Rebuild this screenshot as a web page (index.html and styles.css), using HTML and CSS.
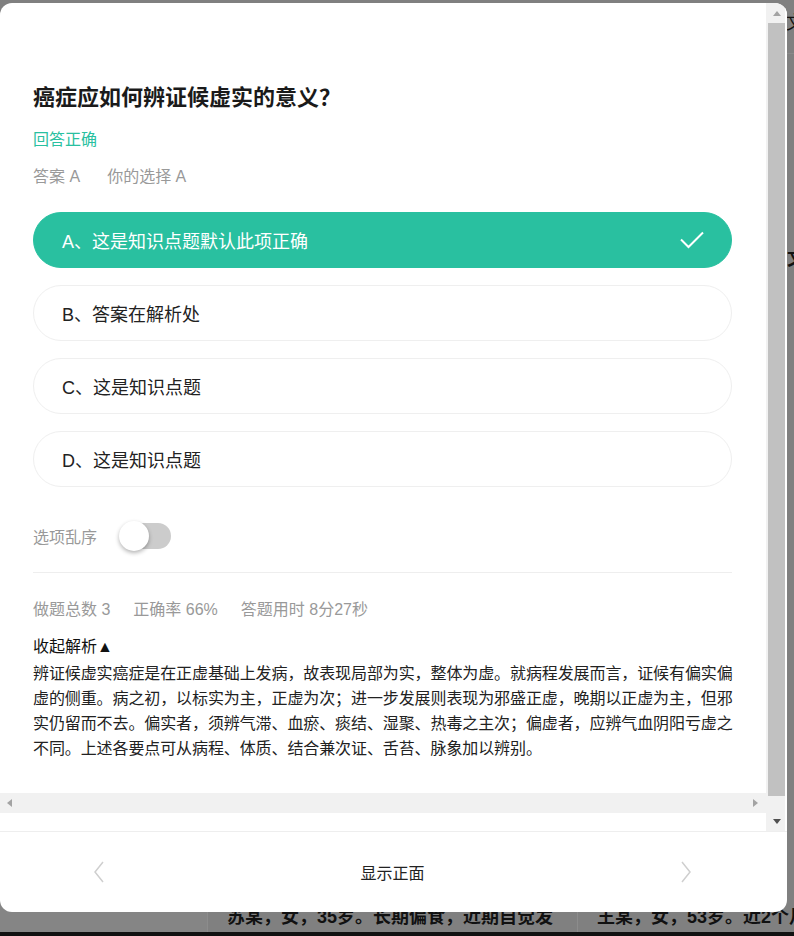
FILE: index.html
```html
<!DOCTYPE html>
<html lang="zh-CN">
<head>
    <meta charset="UTF-8">
    <meta name="viewport" content="width=device-width, initial-scale=1.0">
    <title>题目解析</title>
    <link rel="stylesheet" href="styles.css">
</head>
<body>
    <div class="page">
        <div class="page-head">
            <span class="head-link">课程</span>
            <span class="head-link">文</span>
        </div>
        <div class="page-main">
            <div class="side-mark">文</div>
        </div>
        <div class="cases">
            <div class="case-side"></div>
            <div class="case">苏某，女，35岁。长期偏食，近期自觉发热，乏力，体重下降。</div>
            <div class="case">王某，女，53岁。近2个月来胃脘胀痛，纳差。</div>
        </div>
        <div class="page-foot"></div>
    </div>

    <div class="modal">
        <div class="modal-body">
            <div class="body-main">
                <div class="sheet">
                    <h2 class="q-title">癌症应如何辨证候虚实的意义？</h2>
                    <p class="result">回答正确</p>
                    <p class="answer"><span>答案 A</span><span>你的选择 A</span></p>

                    <ul class="options">
                        <li class="option correct">
                            <span>A、这是知识点题默认此项正确</span>
                            <svg class="check" width="24" height="18" viewBox="0 0 24 18">
                                <polyline points="1,8.5 8.5,16 23,1.5" fill="none" stroke="#fff" stroke-width="2"/>
                            </svg>
                        </li>
                        <li class="option"><span>B、答案在解析处</span></li>
                        <li class="option"><span>C、这是知识点题</span></li>
                        <li class="option"><span>D、这是知识点题</span></li>
                    </ul>

                    <div class="shuffle">
                        <span>选项乱序</span>
                        <span class="switch"><span class="knob"></span></span>
                    </div>

                    <div class="stats">
                        <span>做题总数 3</span>
                        <span>正确率 66%</span>
                        <span>答题用时 8分27秒</span>
                    </div>

                    <div class="analysis-toggle">收起解析▲</div>
                    <p class="analysis">辨证候虚实癌症是在正虚基础上发病，故表现局部为实，整体为虚。就病程发展而言，证候有偏实偏虚的侧重。病之初，以标实为主，正虚为次；进一步发展则表现为邪盛正虚，晚期以正虚为主，但邪实仍留而不去。偏实者，须辨气滞、血瘀、痰结、湿聚、热毒之主次；偏虚者，应辨气血阴阳亏虚之不同。上述各要点可从病程、体质、结合兼次证、舌苔、脉象加以辨别。</p>
                </div>
                <div class="hbar">
                    <span class="arrow arrow-left"></span>
                    <span class="arrow arrow-right"></span>
                </div>
            </div>
            <div class="vbar">
                <div class="vbar-btn"><span class="arrow arrow-up"></span></div>
                <div class="vbar-track"><div class="vbar-thumb"></div></div>
                <div class="vbar-btn"><span class="arrow arrow-down"></span></div>
            </div>
        </div>
        <div class="modal-foot">
            <svg class="nav" width="12" height="22" viewBox="0 0 12 22">
                <polyline points="10,1 2,11 10,21" fill="none" stroke="#cfcfcf" stroke-width="1.5"/>
            </svg>
            <span class="flip">显示正面</span>
            <svg class="nav" width="12" height="22" viewBox="0 0 12 22">
                <polyline points="2,1 10,11 2,21" fill="none" stroke="#cfcfcf" stroke-width="1.5"/>
            </svg>
        </div>
    </div>
</body>
</html>
```

FILE: styles.css
```css
body{
    margin: 0;
    background-color: #808080;
    font-family: "Liberation Sans", "Noto Sans CJK SC", sans-serif;
    overflow: hidden;
}

/* page behind the dimmed overlay */
.page{
    height: 936px;
    display: flex;
    flex-direction: column;
}

.page-head{
    height: 54px;
    border-bottom: 1px solid #8a8a8a;
    display: flex;
    justify-content: flex-end;
    align-items: flex-start;
    gap: 20px;
    padding-top: 8px;
    box-sizing: border-box;
    font-size: 18px;
    color: #111;
}

.head-link:last-child{
    margin-right: -10px;
}

.page-main{
    flex: 1;
    display: flex;
    justify-content: flex-end;
    padding-top: 190px;
}

.side-mark{
    font-size: 18px;
    font-weight: bold;
    color: #111;
    margin-right: -11px;
}

.cases{
    display: grid;
    grid-template-columns: 207px 370px 1fr;
    height: 31px;
}

.case-side{
    background-color: #858585;
}

.case{
    border-left: 1px solid #8c8c8c;
    padding: 2px 18px 0 19px;
    font-size: 18px;
    line-height: 28px;
    font-weight: bold;
    color: #111;
    overflow: hidden;
}

.case:last-child{
    padding-right: 0;
    white-space: nowrap;
}

.page-foot{
    height: 4px;
    background-color: #111;
}

/* dialog */
.modal{
    position: absolute;
    top: 3px;
    left: 0;
    width: 787px;
    height: 909px;
    background-color: #fff;
    border-radius: 12px;
    overflow: hidden;
    display: flex;
    flex-direction: column;
}

.modal-body{
    height: 828px;
    display: flex;
}

.body-main{
    flex: 1;
    display: flex;
    flex-direction: column;
    padding-bottom: 18px;
}

.sheet{
    flex: 1;
    padding: 80px 0 0 33px;
}

.sheet > *{
    width: 699px;
}

/* scrollbars */
.hbar{
    height: 20px;
    background-color: #f1f1f1;
    display: flex;
    align-items: center;
    justify-content: space-between;
    padding: 0 8px 0 7px;
}

.vbar{
    width: 21px;
    display: flex;
    flex-direction: column;
    background-color: #f1f1f1;
    border-right: 2px solid #fff;
    box-sizing: border-box;
}

.vbar-btn{
    height: 20px;
    display: flex;
    align-items: center;
    justify-content: center;
}

.vbar-track{
    flex: 1;
    padding: 0 0 15px 2px;
}

.vbar-thumb{
    height: 100%;
    background-color: #c1c1c1;
}

.arrow{
    width: 0;
    height: 0;
    border: 4px solid transparent;
}

.arrow-up{
    border-top: 0;
    border-bottom: 5px solid #a3a3a3;
    margin-left: 2px;
}

.arrow-down{
    border-bottom: 0;
    border-top: 5px solid #505050;
    margin-left: 2px;
}

.arrow-left{
    border-left: 0;
    border-right: 5px solid #a3a3a3;
}

.arrow-right{
    border-right: 0;
    border-left: 5px solid #a3a3a3;
}

/* question */
.q-title{
    margin: 0;
    font-size: 22px;
    line-height: 30px;
    font-weight: bold;
    color: #1a1a1a;
}

.result{
    margin: 15px 0 0;
    font-size: 16px;
    line-height: 24px;
    color: #29c0a0;
}

.answer{
    margin: 13px 0 0;
    font-size: 16px;
    line-height: 24px;
    color: #999;
    display: flex;
    gap: 27px;
}

.options{
    list-style: none;
    margin: 23px 0 0;
    padding: 0;
    display: flex;
    flex-direction: column;
    gap: 17px;
}

.option{
    height: 56px;
    box-sizing: border-box;
    border: 1px solid #efefef;
    border-radius: 28px;
    padding: 0 27px 0 28px;
    display: flex;
    align-items: center;
    justify-content: space-between;
    font-size: 18px;
    color: #222;
}

.option.correct{
    background-color: #29c0a0;
    border-color: #29c0a0;
    color: #fff;
}

.shuffle{
    margin-top: 33px;
    height: 32px;
    display: flex;
    align-items: center;
    gap: 22px;
    font-size: 16px;
    color: #999;
}

.switch{
    position: relative;
    width: 52px;
    height: 32px;
}

.switch::before{
    content: "";
    position: absolute;
    left: 4px;
    right: 0;
    top: 3px;
    height: 26px;
    border-radius: 13px;
    background-color: #ccc;
}

.knob{
    position: absolute;
    left: 0;
    top: 1px;
    width: 30px;
    height: 30px;
    border-radius: 50%;
    background-color: #fff;
    box-shadow: 0 2px 4px rgba(0, 0, 0, 0.3);
}

.stats{
    margin-top: 20px;
    padding-top: 25px;
    border-top: 1px solid #eee;
    display: flex;
    gap: 23px;
    font-size: 16px;
    line-height: 24px;
    color: #999;
}

.analysis-toggle{
    margin-top: 13px;
    font-size: 16px;
    line-height: 24px;
    color: #111;
}

.sheet > .analysis{
    width: 706px;
    margin: 2px 0 0;
    font-size: 16px;
    line-height: 25px;
    letter-spacing: -0.1px;
    color: #222;
}

.modal-foot{
    flex: 1;
    border-top: 1px solid #eee;
    display: flex;
    align-items: center;
    justify-content: space-between;
    padding: 0 95px 0 93px;
}

.flip{
    font-size: 16px;
    color: #222;
}
```
